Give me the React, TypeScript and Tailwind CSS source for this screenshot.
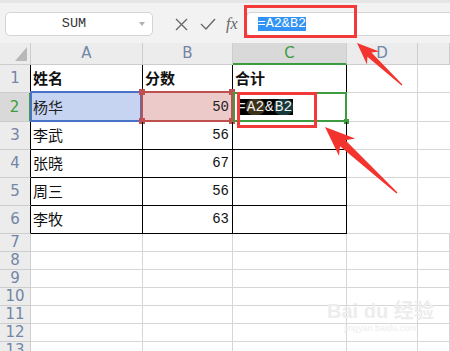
import React from "react";

const cols = ["A", "B", "C", "D", ""];
const colWidths = "grid-cols-[31px_112px_90px_114px_71px_1fr]";

const data = [
  ["姓名", "分数", "合计"],
  ["杨华", "50", ""],
  ["李武", "56", ""],
  ["张晓", "67", ""],
  ["周三", "56", ""],
  ["李牧", "63", ""],
];

const rowHeights = ["h-[28px]", "h-[29px]", "h-[28px]", "h-[28px]", "h-[28px]", "h-[28px]"];
const extraRows = [7, 8, 9, 10, 11, 12, 13];

const cjk = "font-[family-name:'Noto_Sans_CJK_SC','Noto_Sans',sans-serif]";
const mono = "font-[family-name:'Liberation_Mono','DejaVu_Sans_Mono',monospace]";
const sans = "font-[family-name:'DejaVu_Sans','Liberation_Sans',sans-serif]";

function Corner({ className }: { className: string }) {
  return <span className={`absolute w-[6px] h-[6px] bg-[#c0504d] ${className}`} />;
}

function Arrow({ points }: { points: string }) {
  return <polygon points={points} fill="#f2332e" />;
}

export default function App() {
  return (
    <div className="relative w-[450px] h-[351px] overflow-hidden bg-white">
      {/* formula bar */}
      <div className="h-[43px] bg-[#f2f2f2] border-t-[3px] border-[#e6e6e6] flex items-start pt-[9px] pl-[5px]">
        <div className="w-[148px] h-[24px] bg-white border border-[#d4d4d4] rounded-[5px] flex items-center">
          <span className={`flex-1 text-center pl-[6px] text-[13.5px] text-[#333] ${mono}`}>SUM</span>
          <svg width="14" height="8" viewBox="0 0 14 8" className="mr-[2px]">
            <path d="M3 2 L9 2 L6 6 Z" fill="#b0b0b0" />
          </svg>
        </div>
        <div className="flex items-center h-[24px] ml-[22px] gap-[12px] text-[#666]">
          <svg width="13" height="13" viewBox="0 0 13 13">
            <path d="M1 1 L12 12 M12 1 L1 12" stroke="#666" strokeWidth="1.3" />
          </svg>
          <svg width="16" height="12" viewBox="0 0 16 12">
            <path d="M1 6 L6 11 L15 1" stroke="#666" strokeWidth="1.3" fill="none" />
          </svg>
          <span className="text-[16px] italic text-[#666] font-[family-name:'Liberation_Serif',serif] -ml-[2px]">fx</span>
        </div>
        <div className="flex-1 h-[24px] ml-[8px] bg-white border border-r-0 border-[#d4d4d4] rounded-l-[5px] flex items-center pl-[11px]">
          <span className={`bg-[#3393f5] text-white text-[13.5px] leading-[14px] ${mono}`}>=A2&amp;B2</span>
        </div>
      </div>

      {/* sheet */}
      <div className={`grid ${colWidths}`}>
        <div className="relative h-[22px] bg-[#ececec] border-r border-b border-[#cdcdcd]">
          <svg width="12" height="14" viewBox="0 0 12 14" className="absolute left-[15px] top-[4px]">
            <path d="M12 0 L12 14 L0 14 Z" fill="#b8b8b8" />
          </svg>
        </div>
        {cols.map((c, i) =>
          c === "C" ? (
            <div
              key={i}
              className={`h-[22px] bg-[#d9d9d9] border-r border-[#cdcdcd] border-b-2 border-b-[#3d9c40] flex items-center justify-center text-[15px] text-[#3d9c40] ${sans}`}
            >
              {c}
            </div>
          ) : (
            <div
              key={i}
              className={`h-[22px] bg-[#ececec] border-r border-b border-[#cdcdcd] flex items-center justify-center text-[15px] text-[#7286a6] ${sans}`}
            >
              {c}
            </div>
          )
        )}

        {data.map((row, r) => {
          const h = rowHeights[r];
          const sel = r === 1;
          return (
            <React.Fragment key={r}>
              <div
                className={`${h} flex items-center justify-center border-b border-[#cdcdcd] text-[15px] ${sans} ${
                  sel
                    ? "bg-[#d9d9d9] text-[#3d9c40] border-r-2 border-r-[#3d9c40]"
                    : "bg-[#ececec] text-[#7286a6] border-r border-r-black"
                }`}
              >
                {r + 1}
              </div>
              {row.map((v, c) => {
                const base = `${h} relative border-r border-b border-black flex items-center`;
                if (sel && c === 0)
                  return (
                    <div key={c} className={`${base} bg-[#c6d4f1] pl-[2px] text-[15px] text-[#222] ${cjk}`}>
                      <span className="absolute -left-px -top-[2px] right-0 -bottom-[1px] border-2 border-[#4a72c8]" />
                      <span className="relative">{v}</span>
                    </div>
                  );
                if (sel && c === 1)
                  return (
                    <div key={c} className={`${base} bg-[#edcaca] justify-end pr-[3px] text-[14px] text-[#222] ${mono}`}>
                      <span className="absolute -left-[2px] -top-[2px] right-[-1px] -bottom-[1px] border-2 border-[#c0504d]" />
                      <Corner className="-left-[4px] -top-[4px]" />
                      <Corner className="-left-[4px] -bottom-[3px]" />
                      <Corner className="-right-[3px] -top-[4px]" />
                      <Corner className="-right-[3px] -bottom-[3px]" />
                      <span className="relative">{v}</span>
                    </div>
                  );
                if (sel && c === 2)
                  return (
                    <div key={c} className={`${base} pl-[4px]`}>
                      <span className="absolute left-0 -top-px -right-px -bottom-px border-2 border-[#3d9c40]" />
                      <span className="absolute -right-[3px] -bottom-[3px] w-[5px] h-[5px] bg-[#3d9c40]" />
                      <span className={`relative flex items-center bg-black text-[#f0f0f0] text-[14.5px] leading-[16px] ${mono}`}>
                        =<span className="bg-[#3d3219] rounded-[7px] px-[1px]">A2</span>&amp;
                        <span className="bg-[#163a3c] rounded-[7px] px-[1px]">B2</span>
                      </span>
                    </div>
                  );
                const numeric = c === 1 && r > 0;
                return (
                  <div
                    key={c}
                    className={`${base} ${
                      numeric ? `justify-end pr-[3px] text-[14px] ${mono}` : `pl-[2px] text-[15px] ${cjk}`
                    } ${r === 0 ? "font-bold" : ""} text-[#111]`}
                  >
                    {v}
                  </div>
                );
              })}
              <div className={`${h} border-r border-b border-[#d6d6d6]`} />
              <div className={`${h} border-b border-[#d6d6d6]`} />
            </React.Fragment>
          );
        })}

        {extraRows.map((n) => (
          <React.Fragment key={n}>
            <div
              className={`h-[18px] bg-[#ececec] border-r border-b border-[#cdcdcd] flex items-center justify-center text-[15px] text-[#7286a6] ${sans}`}
            >
              {n}
            </div>
            {cols.map((c, i) => (
              <div key={i} className="h-[18px] border-r border-b border-[#d6d6d6]" />
            ))}
          </React.Fragment>
        ))}
      </div>

      {/* watermark */}
      <div className="absolute left-[327px] top-[300px] flex flex-col items-center text-[#ededed] pointer-events-none">
        <span className="text-[20px] font-bold leading-[22px] font-[family-name:'Liberation_Sans','Noto_Sans_CJK_SC',sans-serif]">
          Bai du 经验
        </span>
        <span className="text-[9px] leading-[12px] font-[family-name:'Liberation_Sans',sans-serif]">jingyan.baidu.com</span>
      </div>

      {/* annotations */}
      <div className="absolute left-[244px] top-[5px] w-[113px] h-[33px] border-[3px] border-[#f23a3a]" />
      <div className="absolute left-[237px] top-[92px] w-[80px] h-[36px] border-[3px] border-[#f23a3a]" />
      <svg className="absolute left-0 top-0 pointer-events-none" width="450" height="351">
        <Arrow points="357,43 379.2,51.4 371.4,52.4 402.4,84.6 401.6,85.4 367.4,56.8 367,64.6" />
        <Arrow points="325,127 355.2,138.5 345.4,140.3 397.5,192.5 396.5,193.5 340,146.2 339,156.1" />
      </svg>
    </div>
  );
}
